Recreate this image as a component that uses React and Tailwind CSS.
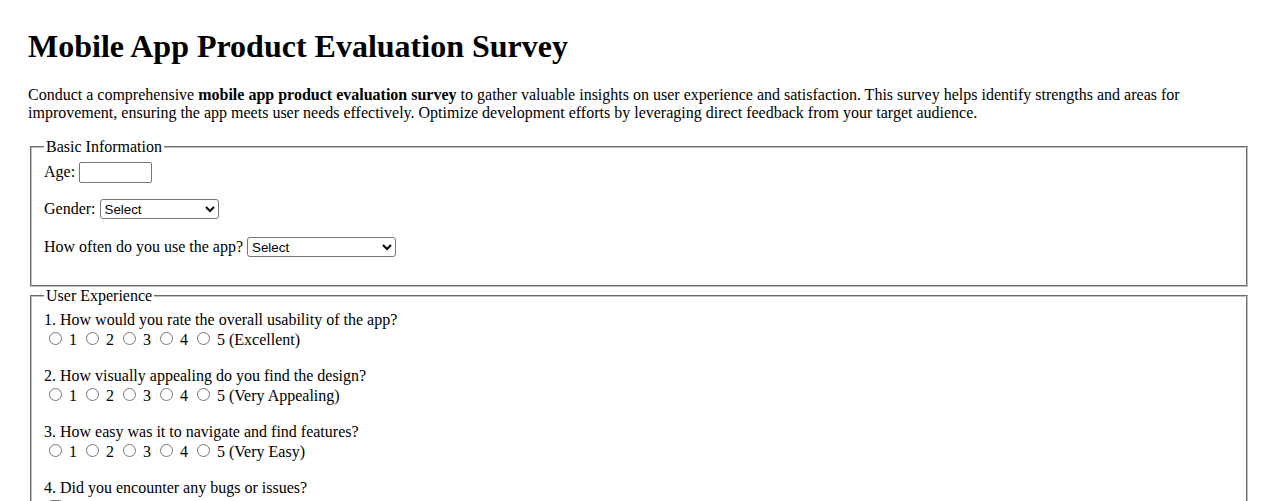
import React from "react";

const fieldsetCls =
  "mx-[2px] [border:2px_groove_#c0c0c0] pt-[5.6px] px-3 pb-[10px] min-w-0";
const radioCls = "m-[3px_3px_0_5px] w-[13px] h-[13px] align-baseline";

function Scale({ name, last }) {
  const items = [1, 2, 3, 4, 5];
  return (
    <div className="pb-[2px]">
      {items.map((n) => (
        <React.Fragment key={n}>
          <label>
            <input type="radio" name={name} className={radioCls} />{" "}
            {n === 5 ? `5 (${last})` : n}
          </label>{" "}
        </React.Fragment>
      ))}
    </div>
  );
}

const selectCls =
  "font-['Liberation_Sans',Arial,sans-serif] text-[13.333px] leading-[normal] text-black bg-white border border-[#767676] rounded-[3px] h-[20px] align-baseline";

export default function App() {
  return (
    <div className="p-7 font-['Liberation_Serif','Times_New_Roman',serif] text-[16px] leading-[normal] text-black bg-white min-h-[501px]">
      <h1 className="text-[32px] font-bold mb-[21.44px]">
        Mobile App Product Evaluation Survey
      </h1>
      <p className="mb-4">
        Conduct a comprehensive <strong className="font-bold">mobile app product evaluation survey</strong> to gather valuable insights on user experience and satisfaction. This survey helps identify strengths and areas for improvement, ensuring the app meets user needs effectively. Optimize development efforts by leveraging direct feedback from your target audience.
      </p>
      <form>
        <fieldset className={fieldsetCls}>
          <legend className="px-[2px]">Basic Information</legend>
          <div className="mb-4 h-[21px]">
            <label>
              Age:{" "}
              <input
                type="number"
                className="w-[73px] h-[21px] border border-[#767676] rounded-[2px] bg-white align-baseline [appearance:textfield] px-[2px] font-['Liberation_Sans',Arial,sans-serif] text-[13.333px]"
              />
            </label>
          </div>
          <div className="mb-4 h-[22px]">
            <label>
              Gender:{" "}
              <select className={selectCls + " w-[119px]"} defaultValue="">
                <option value="">Select</option>
                <option>Male</option>
                <option>Female</option>
                <option>Other</option>
                <option>Prefer not to say</option>
              </select>
            </label>
          </div>
          <div className="mb-4 h-[22px]">
            <label>
              How often do you use the app?{" "}
              <select className={selectCls + " w-[149px]"} defaultValue="">
                <option value="">Select</option>
                <option>Several times a day</option>
                <option>Daily</option>
                <option>Weekly</option>
                <option>Monthly</option>
                <option>Rarely</option>
              </select>
            </label>
          </div>
        </fieldset>
        <fieldset className={fieldsetCls}>
          <legend className="px-[2px]">User Experience</legend>
          <div className="mb-4">
            <p>1. How would you rate the overall usability of the app?</p>
            <Scale name="q1" last="Excellent" />
          </div>
          <div className="mb-4">
            <p>2. How visually appealing do you find the design?</p>
            <Scale name="q2" last="Very Appealing" />
          </div>
          <div className="mb-4">
            <p>3. How easy was it to navigate and find features?</p>
            <Scale name="q3" last="Very Easy" />
          </div>
          <div className="mb-4">
            <p>4. Did you encounter any bugs or issues?</p>
            <div className="pb-[2px]">
              <label>
                <input type="checkbox" className={radioCls} /> Yes
              </label>
            </div>
          </div>
        </fieldset>
      </form>
    </div>
  );
}
